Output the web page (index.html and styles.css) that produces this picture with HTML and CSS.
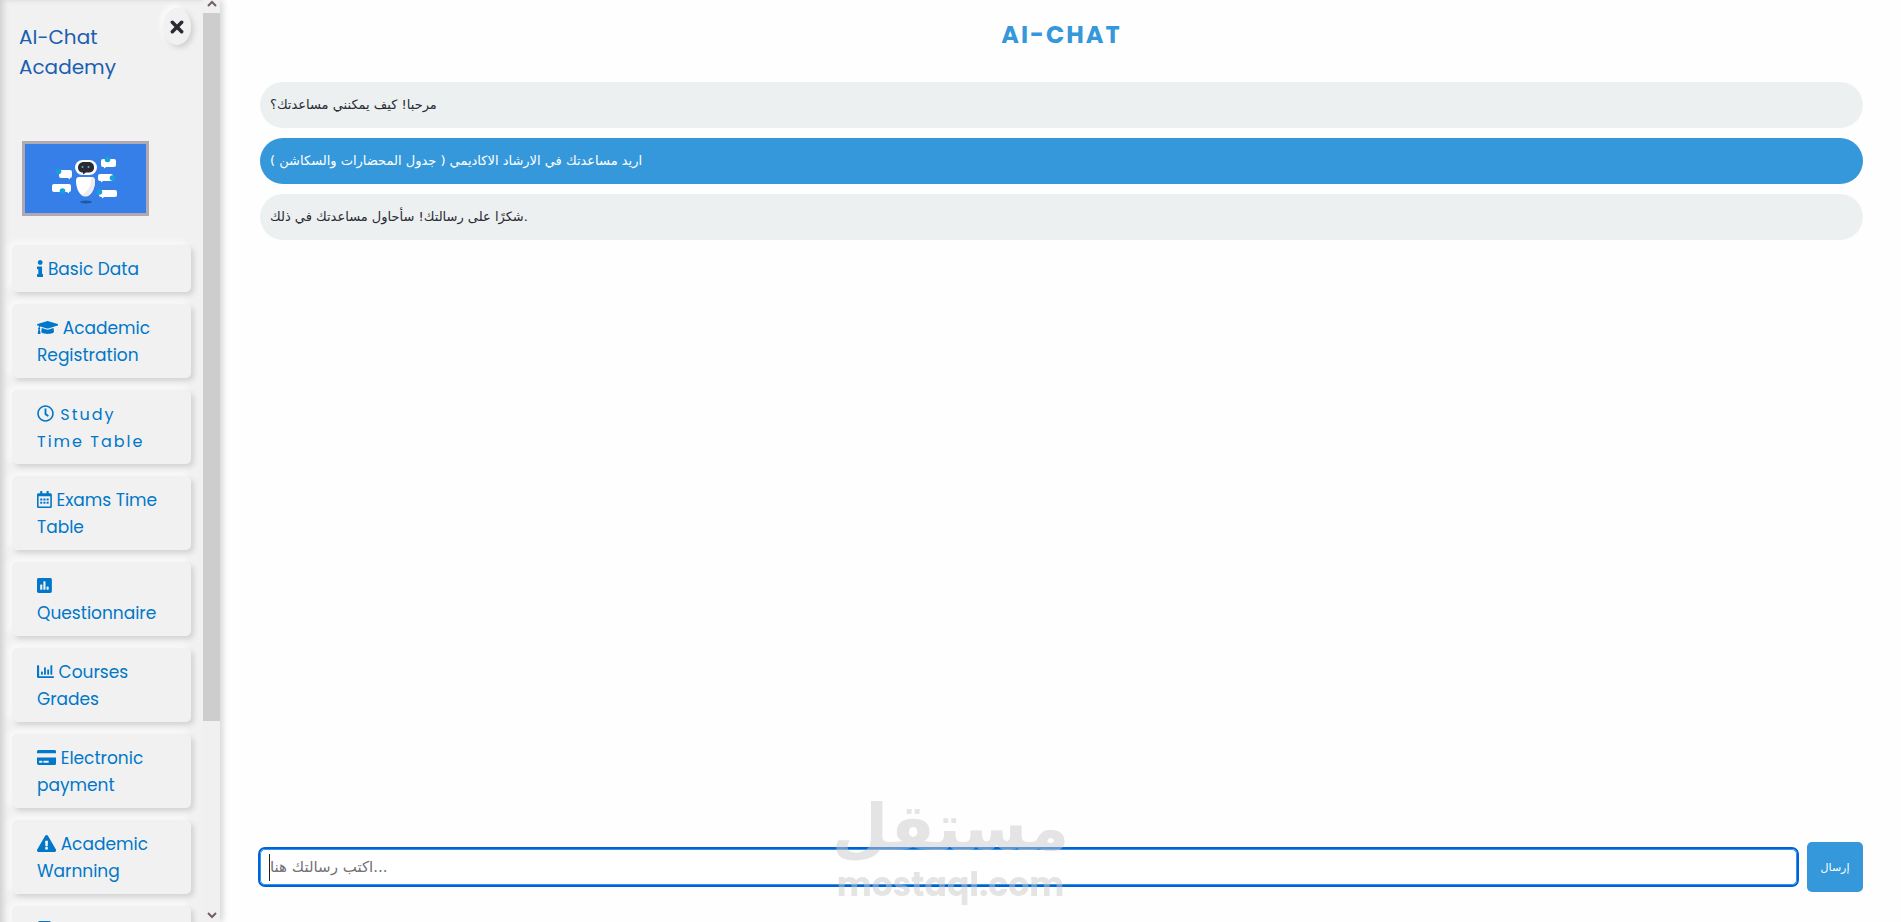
FILE: index.html
```html
<!DOCTYPE html>
<html lang="en">
<head>
    <meta charset="UTF-8">
    <meta name="viewport" content="width=device-width, initial-scale=1.0">
    <title>AI-Chat Academy</title>
    <link rel="stylesheet" href="styles.css">
</head>
<body>
    <aside class="sidebar">
        <div class="sidebar-content">
            <div class="sidebar-header">
                <h2 class="brand">AI-Chat Academy</h2>
                <button class="close-btn" type="button" aria-label="Close menu">
                    <svg viewBox="0 0 12 12"><path d="M2 2l8 8M10 2l-8 8"/></svg>
                </button>
            </div>

            <svg class="robot" viewBox="0 0 121 69" role="img" aria-label="Chat robot">
                <rect width="121" height="69" fill="#377fe8"/>
                <ellipse cx="61" cy="58" rx="6" ry="1.5" fill="#1f5a9e"/>
                <rect x="50" y="16" width="22" height="15" rx="7.5" fill="#fff"/>
                <path d="M59 18h4c4 0 6 2 6 5.500s-2 5-6 5h-2l-3 2v-2c-3 0-5-2-5-5s2-5.500 6-5.500z" fill="#2b2a33"/>
                <circle cx="57.500" cy="23" r="1" fill="#39b8f0"/>
                <circle cx="63.500" cy="23" r="1" fill="#39b8f0"/>
                <path d="M54 33h13q3 0 3 4c0 8-4 15.500-9.500 15.500S51 45 51 37q0-4 3-4z" fill="#fff"/>
                <path d="M66 33c1 8-3 14-9 18 7 4 13-5 13-14q0-3-4-4z" fill="#ececf0"/>
                <g fill="#fff">
                    <path d="M78 15h11q2 0 2 2v4q0 2-2 2h-8l-2 1.500v-1.500h-1q-2 0-2-2v-4q0-2 2-2z"/>
                    <path d="M36 26h9q2 0 2 2v4q0 2-2 2v1.500l-2-1.500h-7q-2 0-2-2v-4q0-2 2-2z"/>
                    <path d="M75 30h11q2 0 2 2v3q0 2-2 2h-8l-2 1.500v-1.500h-1q-2 0-2-2v-3q0-2 2-2z"/>
                    <path d="M29 40h15q2 0 2 2v4q0 2-2 2v1.500l-2-1.500h-13q-2 0-2-2v-4q0-2 2-2z"/>
                    <path d="M76 46h14q2 0 2 2v3q0 2-2 2h-11l-2 1.500v-1.500h-1q-2 0-2-2v-3q0-2 2-2z"/>
                </g>
                <g fill="#13a3da">
                    <circle cx="82.500" cy="15.500" r="2.800"/>
                    <circle cx="33.500" cy="27.500" r="2.800"/>
                    <circle cx="87.500" cy="34" r="2.800"/>
                    <circle cx="37.500" cy="47" r="2.800"/>
                    <circle cx="74.500" cy="48" r="2.800"/>
                </g>
            </svg>

            <nav class="menu">
                <a class="menu-item" href="#"><svg class="icon" viewBox="0 0 192 512"><path d="M20 424.229h20V279.771H20c-11.046 0-20-8.954-20-20V212c0-11.046 8.954-20 20-20h112c11.046 0 20 8.954 20 20v212.229h20c11.046 0 20 8.954 20 20V492c0 11.046-8.954 20-20 20H20c-11.046 0-20-8.954-20-20v-47.771c0-11.046 8.954-20 20-20zM96 0C56.235 0 24 32.235 24 72s32.235 72 72 72 72-32.235 72-72S135.764 0 96 0z"/></svg> Basic Data</a>
                <a class="menu-item" href="#"><svg class="icon" viewBox="0 0 640 512"><path d="M622.34 153.2L343.4 67.5c-15.2-4.67-31.6-4.67-46.79 0L17.66 153.2c-23.54 7.23-23.54 38.36 0 45.59l48.63 14.94c-10.67 13.19-17.23 29.28-17.88 46.9C38.78 266.15 32 276.11 32 288c0 10.78 5.68 19.85 13.86 25.65L20.33 428.53C18.11 438.52 25.71 448 35.94 448h56.11c10.24 0 17.84-9.48 15.62-19.47L82.14 313.65C90.32 307.85 96 298.78 96 288c0-11.57-6.47-21.25-15.66-26.87.76-15.02 8.44-28.3 20.69-36.72L296.6 284.5c9.06 2.78 26.44 6.25 46.79 0l278.95-85.7c23.55-7.24 23.55-38.36 0-45.6zM352.79 315.09c-28.53 8.76-52.84 3.92-65.59 0l-145.02-44.55L128 384c0 35.35 85.96 64 192 64s192-28.65 192-64l-14.18-113.47-145.03 44.56z"/></svg> Academic Registration</a>
                <a class="menu-item spaced" href="#"><svg class="icon" viewBox="0 0 512 512"><path d="M256 8C119 8 8 119 8 256s111 248 248 248 248-111 248-248S393 8 256 8zm0 448c-110.5 0-200-89.5-200-200S145.5 56 256 56s200 89.5 200 200-89.5 200-200 200zm61.8-104.4l-84.9-61.7c-3.1-2.3-4.9-5.9-4.9-9.7V116c0-6.6 5.4-12 12-12h32c6.6 0 12 5.4 12 12v141.7l66.8 48.6c5.4 3.9 6.500 11.4 2.6 16.8L334.6 349c-3.9 5.3-11.4 6.5-16.8 2.6z"/></svg> Study <br>Time Table</a>
                <a class="menu-item" href="#"><svg class="icon" viewBox="0 0 448 512"><path d="M148 288h-40c-6.6 0-12-5.4-12-12v-40c0-6.6 5.4-12 12-12h40c6.6 0 12 5.4 12 12v40c0 6.6-5.4 12-12 12zm108-12v-40c0-6.6-5.4-12-12-12h-40c-6.6 0-12 5.4-12 12v40c0 6.6 5.4 12 12 12h40c6.6 0 12-5.4 12-12zm96 0v-40c0-6.6-5.4-12-12-12h-40c-6.6 0-12 5.4-12 12v40c0 6.6 5.4 12 12 12h40c6.6 0 12-5.4 12-12zm-96 96v-40c0-6.6-5.4-12-12-12h-40c-6.6 0-12 5.4-12 12v40c0 6.6 5.4 12 12 12h40c6.6 0 12-5.4 12-12zm-96 0v-40c0-6.6-5.4-12-12-12h-40c-6.6 0-12 5.4-12 12v40c0 6.6 5.4 12 12 12h40c6.6 0 12-5.4 12-12zm192 0v-40c0-6.6-5.4-12-12-12h-40c-6.6 0-12 5.4-12 12v40c0 6.6 5.4 12 12 12h40c6.6 0 12-5.4 12-12zm96-260v352c0 26.5-21.5 48-48 48H48c-26.5 0-48-21.5-48-48V112c0-26.5 21.5-48 48-48h48V12c0-6.6 5.4-12 12-12h40c6.6 0 12 5.4 12 12v52h128V12c0-6.6 5.4-12 12-12h40c6.6 0 12 5.4 12 12v52h48c26.5 0 48 21.5 48 48zm-48 346V160H48v298c0 3.3 2.7 6 6 6h340c3.3 0 6-2.7 6-6z"/></svg> Exams Time Table</a>
                <a class="menu-item" href="#"><svg class="icon" viewBox="0 0 448 512"><path d="M400 32H48C21.5 32 0 53.5 0 80v352c0 26.5 21.5 48 48 48h352c26.5 0 48-21.5 48-48V80c0-26.5-21.5-48-48-48zM160 368c0 8.84-7.16 16-16 16h-32c-8.84 0-16-7.16-16-16V240c0-8.84 7.16-16 16-16h32c8.84 0 16 7.16 16 16v128zm96 0c0 8.84-7.16 16-16 16h-32c-8.84 0-16-7.16-16-16V144c0-8.84 7.16-16 16-16h32c8.84 0 16 7.16 16 16v224zm96 0c0 8.84-7.16 16-16 16h-32c-8.84 0-16-7.16-16-16v-64c0-8.84 7.16-16 16-16h32c8.84 0 16 7.16 16 16v64z"/></svg> Questionnaire</a>
                <a class="menu-item" href="#"><svg class="icon" viewBox="0 0 512 512"><path d="M16 64h32q16 0 16 16v320h432q16 0 16 16v16q0 16-16 16H32q-32 0-32-32V80q0-16 16-16z"/><rect x="120" y="256" width="56" height="96" rx="13"/><rect x="212" y="128" width="56" height="224" rx="13"/><rect x="308" y="192" width="56" height="160" rx="13"/><rect x="404" y="64" width="56" height="288" rx="13"/></svg> Courses Grades</a>
                <a class="menu-item" href="#"><svg class="icon" viewBox="0 0 576 512"><path d="M0 432c0 26.5 21.5 48 48 48h480c26.5 0 48-21.5 48-48V256H0v176zm192-68c0-6.6 5.4-12 12-12h136c6.6 0 12 5.4 12 12v40c0 6.6-5.4 12-12 12H204c-6.6 0-12-5.4-12-12v-40zm-128 0c0-6.6 5.4-12 12-12h72c6.6 0 12 5.4 12 12v40c0 6.6-5.4 12-12 12H76c-6.6 0-12-5.4-12-12v-40zM576 80v48H0V80c0-26.5 21.5-48 48-48h480c26.5 0 48 21.5 48 48z"/></svg> Electronic payment</a>
                <a class="menu-item" href="#"><svg class="icon" viewBox="0 0 576 512"><path d="M569.517 440.013C587.975 472.007 564.806 512 527.94 512H48.054c-36.937 0-59.999-40.055-41.577-71.987L246.423 23.985c18.467-32.009 64.72-31.951 83.154 0l239.94 416.028zM288 354c-25.405 0-46 20.595-46 46s20.595 46 46 46 46-20.595 46-46-20.595-46-46-46zm-43.673-165.346l7.418 136c.347 6.364 5.609 11.346 11.982 11.346h48.546c6.373 0 11.635-4.982 11.982-11.346l7.418-136c.375-6.874-5.098-12.654-11.982-12.654h-63.383c-6.884 0-12.356 5.78-11.981 12.654z"/></svg> Academic Warnning</a>
                <a class="menu-item" href="#" aria-label="More"><svg class="icon" viewBox="0 0 448 512"><rect x="32" width="384" height="512" rx="48"/></svg></a>
            </nav>
        </div>
        <div class="scrollbar">
            <svg class="scroll-arrow" viewBox="0 0 17 13"><path d="M5 6l4-4 4 4"/></svg>
            <div class="scroll-track"><div class="scroll-thumb"></div></div>
            <svg class="scroll-arrow" viewBox="0 0 17 13"><path d="M5 4l4 4 4-4"/></svg>
        </div>
    </aside>

    <main class="chat">
        <h1 class="chat-title">AI-CHAT</h1>
        <div class="messages">
            <div class="message bot">مرحبا! كيف يمكنني مساعدتك؟</div>
            <div class="message user">اريد مساعدتك في الارشاد الاكاديمي ( جدول المحضارات والسكاشن )</div>
            <div class="message bot">شكرًا على رسالتك! سأحاول مساعدتك في ذلك.</div>
        </div>
        <form class="chat-form">
            <input class="chat-input" type="text" placeholder="اكتب رسالتك هنا..." aria-label="اكتب رسالتك هنا">
            <button class="send-btn" type="button">إرسال</button>
        </form>
    </main>

    <div class="watermark">
        <span class="watermark-ar">مستقل</span>
        <span class="watermark-en">mostaql.com</span>
    </div>
</body>
</html>
```
FILE: styles.css
```css
* {
    box-sizing: border-box;
}

body {
    margin: 0;
    display: flex;
    height: 100vh;
    overflow: hidden;
    background: #fefefe;
    font-family: Poppins, Inter, "DejaVu Sans", sans-serif;
}

/* sidebar */
.sidebar {
    display: flex;
    flex: 0 0 220px;
    background: #f1f1f1;
    box-shadow: 2px 0 7px #cfcfd2;
}

.sidebar-content {
    flex: 1;
    padding: 0 12px;
    overflow: hidden;
    box-shadow: inset 6px 2px 6px -3px #cfcfd2;
}

.sidebar-header {
    display: flex;
    justify-content: space-between;
    align-items: flex-start;
    height: 141px;
    padding: 8px 0 0 7px;
}

.brand {
    margin: 14px 0 0;
    width: 120px;
    font-size: 20px;
    font-weight: 400;
    line-height: 30px;
    color: #1c5fb0;
}

.close-btn {
    display: flex;
    align-items: center;
    justify-content: center;
    width: 28px;
    height: 37px;
    padding: 0;
    border: none;
    border-radius: 50%;
    background: #f1f1f1;
    box-shadow: 3px 3px 5px #d3d3d6, -3px -3px 5px #fbfbfb;
    cursor: pointer;
}

.close-btn svg {
    width: 14px;
    height: 14px;
    stroke: #2b2a33;
    stroke-width: 3;
    stroke-linecap: round;
}

.robot {
    display: block;
    width: 127px;
    height: 75px;
    margin-left: 10px;
    border: 3px solid #b0a9b2;
}

.menu {
    display: flex;
    flex-direction: column;
    gap: 12px;
    margin-top: 29px;
}

.menu-item {
    padding: 11px 25px 9px;
    border-radius: 5px;
    background: #f1f1f1;
    box-shadow: 3px 3px 5px #d3d3d6, -3px -3px 6px #fbfbfb;
    color: #0077c8;
    font-size: 17px;
    line-height: 27px;
    text-decoration: none;
}

.spaced {
    font-size: 16px;
    letter-spacing: 2px;
}

.icon {
    height: 17px;
    vertical-align: -2px;
    fill: #0077c8;
}

.scrollbar {
    display: flex;
    flex-direction: column;
    width: 17px;
    background: #f0f0f0;
}

.scroll-arrow {
    width: 17px;
    height: 13px;
    fill: none;
    stroke: #6f6168;
    stroke-width: 2;
}

.scroll-track {
    flex: 1;
}

.scroll-thumb {
    height: 79%;
    background: #cdcdcd;
}

/* chat */
.chat {
    flex: 1;
    display: flex;
    flex-direction: column;
    padding: 17px 38px 30px 40px;
}

.chat-title {
    margin: 0 0 29px;
    font-size: 24px;
    line-height: 36px;
    letter-spacing: 2px;
    text-align: center;
    color: #3498db;
}

.messages {
    flex: 1;
    display: flex;
    flex-direction: column;
    gap: 10px;
}

.message {
    padding: 10px;
    border-radius: 25px;
    font-family: "DejaVu Sans", sans-serif;
    font-size: 13px;
    line-height: 26px;
}

.bot {
    background: #ecf0f1;
    color: #2b2a33;
}

.user {
    background: #3498db;
    color: #fff;
}

.chat-form {
    display: flex;
    align-items: center;
    gap: 10px;
}

/* always shown as active, with a thin cursor line at the start */
.chat-input {
    flex: 1;
    height: 36px;
    padding: 0 9px;
    border: 1px solid #3498db;
    border-radius: 5px;
    outline: 2px solid #0061e0;
    background: linear-gradient(#222, #222) 8px center / 1px 27px no-repeat #fff;
    font-family: "DejaVu Sans", sans-serif;
    font-size: 15px;
}

.chat-input::placeholder {
    color: #757075;
}

.send-btn {
    width: 56px;
    height: 50px;
    padding: 0;
    border: none;
    border-radius: 5px;
    background: #3498db;
    color: #fff;
    font-family: "DejaVu Sans", sans-serif;
    font-size: 11px;
    cursor: pointer;
}

/* watermark over the page */
.watermark {
    position: fixed;
    left: 0;
    right: 0;
    bottom: 18px;
    display: flex;
    flex-direction: column;
    align-items: center;
    color: #c9c9c9;
    opacity: 0.5;
    font-weight: 700;
    pointer-events: none;
}

.watermark-ar {
    font-family: "DejaVu Sans", sans-serif;
    font-size: 65px;
    line-height: 76px;
}

.watermark-en {
    font-size: 33px;
    line-height: 38px;
}
```
